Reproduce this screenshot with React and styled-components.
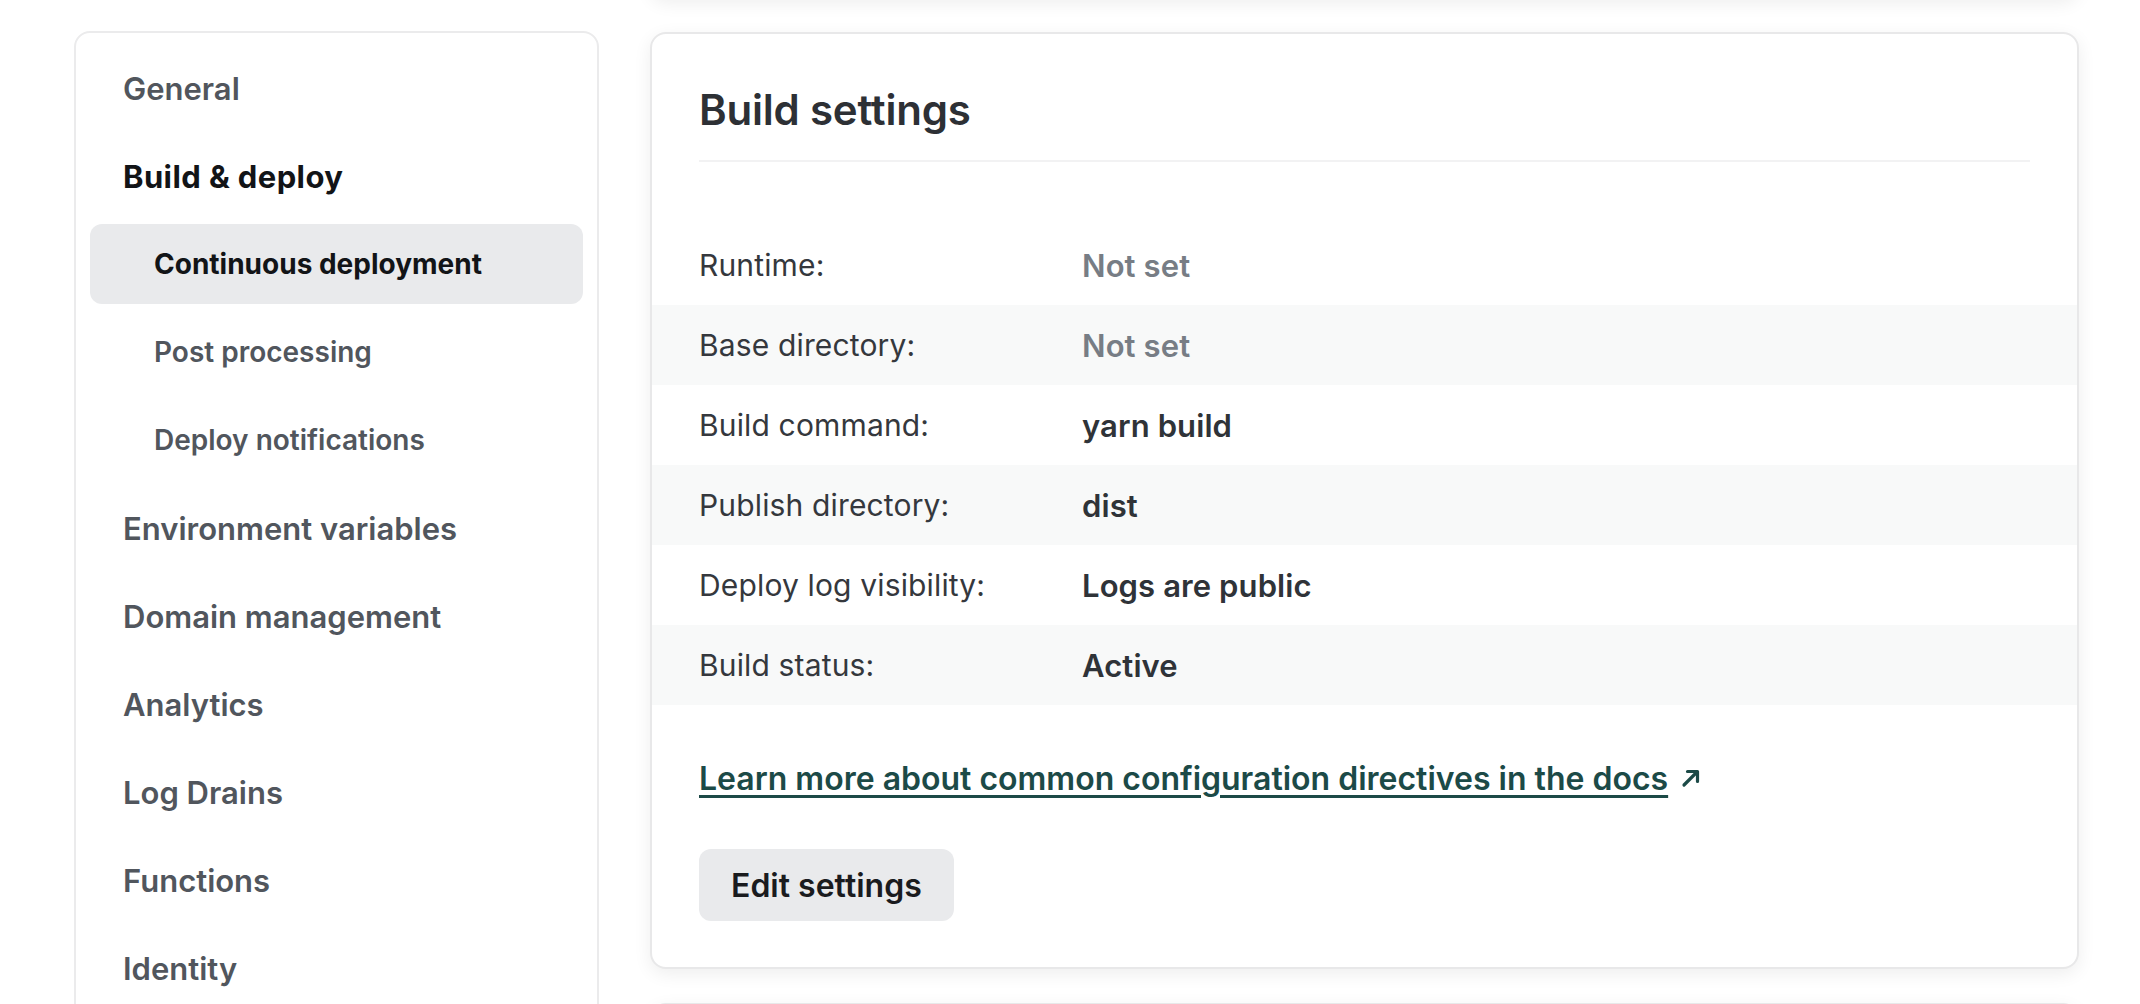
import styled, { createGlobalStyle } from 'styled-components';

// ── Global ───────────────────────────────────────────────────
const GlobalStyle = createGlobalStyle`
  html, body {
    margin: 0;
    padding: 0;
    background: #fff;
    overflow: hidden;
  }
  body {
    font-family: Inter, "Noto Sans", "Liberation Sans", sans-serif;
    -webkit-font-smoothing: antialiased;
  }
  * { box-sizing: border-box; }
`;

// ── Layout ───────────────────────────────────────────────────
const Page = styled.div`
  display: flex;
  align-items: flex-start;
  gap: 51px;
  height: 1004px;
  padding: 31px 61px 0 74px;
  overflow: hidden;
`;

// ── Sidebar nav ──────────────────────────────────────────────
const SideNav = styled.nav`
  width: 525px;
  flex-shrink: 0;
  border: 2px solid #ebebec;
  border-radius: 16px;
  padding: 15px 14px 40px;
  display: flex;
  flex-direction: column;
  gap: 8px;
  background: #fff;
`;

const NavItem = styled.a`
  height: 80px;
  flex-shrink: 0;
  display: flex;
  align-items: center;
  padding-left: ${({ $sub }) => ($sub ? '64px' : '33px')};
  border-radius: 12px;
  font-size: ${({ $sub }) => ($sub ? '28px' : '31px')};
  font-weight: ${({ $current }) => ($current ? 700 : 600)};
  color: ${({ $current }) => ($current ? '#121417' : '#51565d')};
  background: ${({ $active }) => ($active ? '#e9eaec' : 'transparent')};
  letter-spacing: ${({ $current, $sub }) => ($current && !$sub ? '0.4px' : '0')};
  text-decoration: none;
  cursor: pointer;
`;

// ── Main column / cards ──────────────────────────────────────
const MainColumn = styled.main`
  flex: 1;
  display: flex;
  flex-direction: column;
  gap: 34px;
  margin-top: -73px;
`;

const Card = styled.section`
  background: #fff;
  border: 2px solid #e8e8e9;
  border-radius: 16px;
  box-shadow: 0 5px 18px rgba(0, 0, 0, 0.07);
  height: ${({ $h }) => ($h ? `${$h}px` : 'auto')};
  flex-shrink: 0;
`;

const CardHeader = styled.header`
  padding: 52px 47px 0;
`;

const Title = styled.h2`
  margin: 0;
  font-size: 42px;
  line-height: 48px;
  font-weight: 600;
  color: #2d3035;
  letter-spacing: -0.2px;
  padding-bottom: 26px;
  border-bottom: 2px solid #f2f2f3;
`;

const Rows = styled.dl`
  margin: 63px 0 0;
`;

const Row = styled.div`
  display: grid;
  grid-template-columns: 383px 1fr;
  align-items: center;
  height: 80px;
  padding: 0 47px;
  background: ${({ $striped }) => ($striped ? '#f8f9f9' : 'transparent')};
`;

const Label = styled.dt`
  font-size: 30px;
  font-weight: 400;
  color: #35383d;
  letter-spacing: 0.15px;
`;

const Value = styled.dd`
  margin: 0;
  font-size: 31px;
  font-weight: 600;
  color: ${({ $muted }) => ($muted ? '#777d85' : '#2f3338')};
  letter-spacing: 0.1px;
`;

const CardFooter = styled.div`
  padding: 53px 47px 46px;
  display: flex;
  flex-direction: column;
  align-items: flex-start;
  gap: 51px;
`;

const DocsLink = styled.a`
  display: inline-flex;
  align-items: center;
  gap: 13px;
  height: 40px;
  font-size: 32px;
  font-weight: 600;
  color: #1c4a47;
  letter-spacing: 0;
  cursor: pointer;

  span {
    text-decoration: underline;
    text-decoration-thickness: 3px;
    text-underline-offset: 5px;
  }
`;

const Button = styled.button`
  height: 72px;
  padding: 0 32px;
  border: none;
  border-radius: 12px;
  background: #e9eaec;
  font-family: inherit;
  font-size: 32px;
  font-weight: 600;
  color: #1a1b1e;
  letter-spacing: 0;
  cursor: pointer;
`;

// ── Data ─────────────────────────────────────────────────────
const navItems = [
  { label: 'General' },
  { label: 'Build & deploy', current: true },
  { label: 'Continuous deployment', sub: true, active: true, current: true },
  { label: 'Post processing', sub: true },
  { label: 'Deploy notifications', sub: true },
  { label: 'Environment variables' },
  { label: 'Domain management' },
  { label: 'Analytics' },
  { label: 'Log Drains' },
  { label: 'Functions' },
  { label: 'Identity' },
];

const settings = [
  { label: 'Runtime:', value: 'Not set', muted: true },
  { label: 'Base directory:', value: 'Not set', muted: true },
  { label: 'Build command:', value: 'yarn build' },
  { label: 'Publish directory:', value: 'dist' },
  { label: 'Deploy log visibility:', value: 'Logs are public' },
  { label: 'Build status:', value: 'Active' },
];

const ArrowIcon = () => (
  <svg width="20" height="20" viewBox="0 0 20 20" fill="none">
    <path d="M3 17 L16 4" stroke="currentColor" strokeWidth="3.2" strokeLinecap="round" />
    <path d="M6.5 3.5 H16.5 V13.5" stroke="currentColor" strokeWidth="3.2" strokeLinecap="round" strokeLinejoin="round" />
  </svg>
);

// ── Component ────────────────────────────────────────────────
export default function App() {
  return (
    <>
      <GlobalStyle />
      <Page>
        <SideNav>
          {navItems.map(item => (
            <NavItem
              key={item.label}
              $sub={item.sub}
              $active={item.active}
              $current={item.current}
            >
              {item.label}
            </NavItem>
          ))}
        </SideNav>

        <MainColumn>
          <Card $h={40} />
          <Card>
            <CardHeader>
              <Title>Build settings</Title>
            </CardHeader>
            <Rows>
              {settings.map((row, i) => (
                <Row key={row.label} $striped={i % 2 === 1}>
                  <Label>{row.label}</Label>
                  <Value $muted={row.muted}>{row.value}</Value>
                </Row>
              ))}
            </Rows>
            <CardFooter>
              <DocsLink>
                <span>Learn more about common configuration directives in the docs</span>
                <ArrowIcon />
              </DocsLink>
              <Button>Edit settings</Button>
            </CardFooter>
          </Card>
          <Card $h={300} />
        </MainColumn>
      </Page>
    </>
  );
}
